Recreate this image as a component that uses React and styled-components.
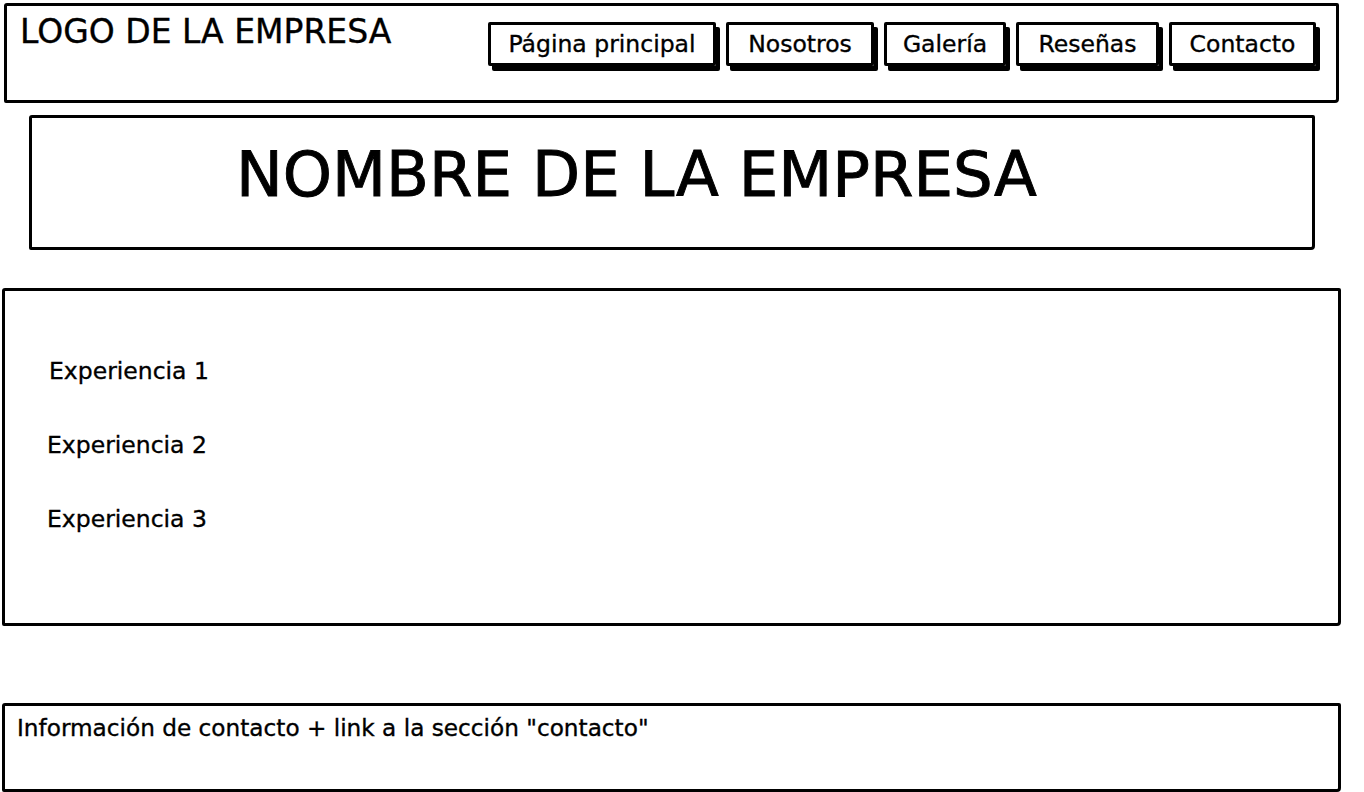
import styled, { createGlobalStyle } from "styled-components";

const GlobalStyle = createGlobalStyle`
  body {
    margin: 0;
    background: #fff;
    font-family: "DejaVu Sans", "Noto Sans", sans-serif;
    color: #000;
    -webkit-text-stroke: 0.35px #000;
  }
`;

const navItems = [
  { label: "Página principal", width: 228 },
  { label: "Nosotros", width: 148 },
  { label: "Galería", width: 122 },
  { label: "Reseñas", width: 143 },
  { label: "Contacto", width: 147 },
];
const experiences = ["Experiencia 1", "Experiencia 2", "Experiencia 3"];

const App = () => {
  return (
    <>
      <GlobalStyle />
      <Page>
        <Header>
          <Logo>LOGO DE LA EMPRESA</Logo>
          <Nav>
            {navItems.map((item) => (
              <NavButton key={item.label} $w={item.width}>
                {item.label}
              </NavButton>
            ))}
          </Nav>
        </Header>
        <TitleBox>
          <Title>NOMBRE DE LA EMPRESA</Title>
        </TitleBox>
        <ExperienceBox>
          {experiences.map((item, i) => (
            <Experience key={item} $shift={i === 0 ? 2 : 0}>
              {item}
            </Experience>
          ))}
        </ExperienceBox>
        <Footer>
          Información de contacto + link a la sección "contacto"
        </Footer>
      </Page>
    </>
  );
};

export default App;

const Page = styled.div`
  width: 1364px;
  padding-top: 3px;
  display: flex;
  flex-direction: column;
`;

const Sketch = styled.div`
  border: 3.5px solid #000;
  border-radius: 3px 2px 4px 2px;
  box-sizing: border-box;
  background: #fff;
`;

const Header = styled(Sketch)`
  margin-left: 4px;
  width: 1335px;
  height: 100px;
  display: flex;
  justify-content: space-between;
  align-items: flex-start;
  padding: 6px 0 0 13px;
`;

const Logo = styled.div`
  font-size: 33px;
  line-height: 40px;
`;

const Nav = styled.div`
  display: flex;
  gap: 10px;
  margin-top: 10px;
  margin-right: 20px;
`;

const NavButton = styled.div`
  width: ${(p) => p.$w}px;
  height: 44px;
  box-sizing: border-box;
  border: 3px solid #000;
  border-radius: 2px;
  box-shadow: 4px 5px 0 #000;
  font-size: 23.5px;
  display: flex;
  align-items: center;
  justify-content: center;
`;

const TitleBox = styled(Sketch)`
  margin: 12px 0 0 29px;
  width: 1286px;
  height: 135px;
  padding: 19px 0 0 204px;
`;

const Title = styled.div`
  font-size: 62.6px;
  line-height: 76px;
  -webkit-text-stroke: 0.9px #000;
`;

const ExperienceBox = styled(Sketch)`
  margin: 38px 0 0 2px;
  width: 1339px;
  height: 338px;
  padding: 65px 0 0 42px;
  display: flex;
  flex-direction: column;
  gap: 44px;
`;

const Experience = styled.div`
  font-size: 23.5px;
  line-height: 30px;
  margin-left: ${(p) => p.$shift}px;
`;

const Footer = styled(Sketch)`
  margin: 77px 0 0 2px;
  width: 1339px;
  height: 89px;
  padding: 7px 0 0 12px;
  font-size: 23.2px;
  line-height: 30px;
`;
